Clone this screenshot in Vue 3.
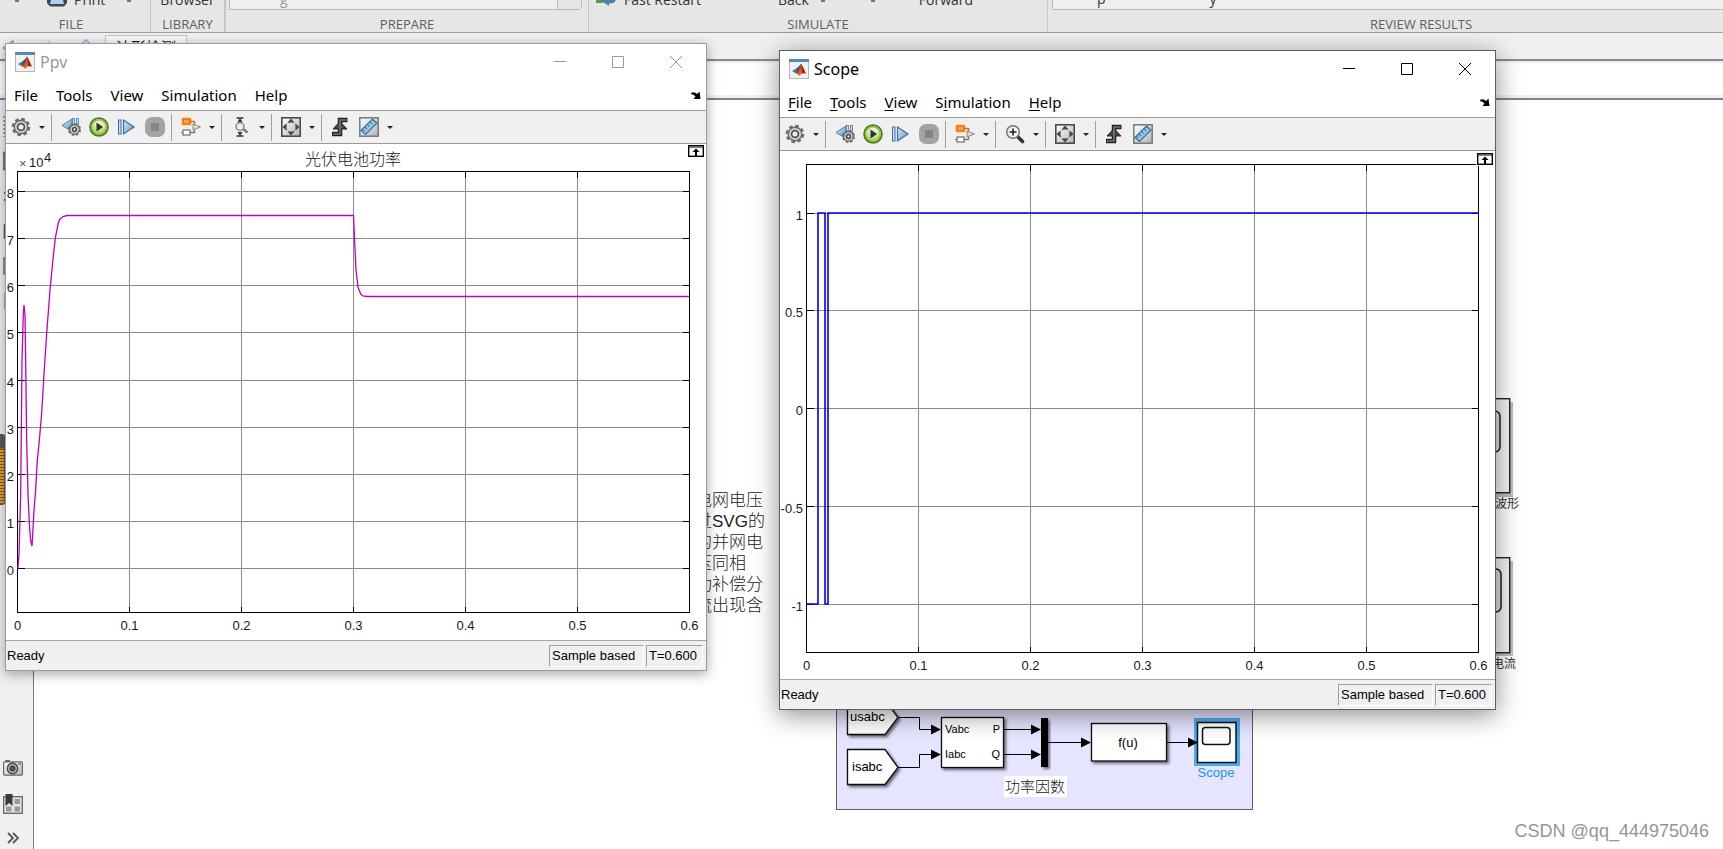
<script setup>
const X_LABELS = ['0', '0.1', '0.2', '0.3', '0.4', '0.5', '0.6']

function makePlot(box, yTicks, xLabelY, labelX) {
  const step = (box.right - box.left) / 6
  return {
    ...box,
    xLabelY,
    labelX,
    xTicks: X_LABELS.map((label, i) => ({ label, x: box.left + step * i })),
    yTicks,
  }
}

const windows = [
  {
    id: 'ppv',
    title: 'Ppv',
    active: false,
    zoomIcon: 'zoom-y',
    viewBox: '0 0 700 496',
    plotTitle: '光伏电池功率',
    plot: makePlot(
      { left: 11.5, right: 683.5, top: 27.5, bottom: 468.5 },
      [8, 7, 6, 5, 4, 3, 2, 1, 0].map((label, i) => ({
        label: String(label),
        y: [47.5, 94.5, 141.5, 188.5, 236.5, 283.5, 330.5, 377.5, 424.5][i],
      })),
      486,
      8,
    ),
    dock: { x: 682, y: 1 },
    curve:
      'M12 424 L13 410 L14.7 349 L16 216 L17.3 170 L18 161 L19 172 L19.5 203 L20.7 299 L22 350 L23.3 379 L24.5 396 L26 402 L28 366 L29.5 348 L31.3 316 L33 300 L35.7 269 L38 230 L40.7 189 L44 146 L47 115 L49.3 94 L52.3 79 L54 75 L57 72.5 L61 71.5 H347.5 L348.7 99 L350 126 L352 143 L354.7 150 L357 152 L361 152.5 H683',
    curveClass: 'curve-power',
  },
  {
    id: 'scope',
    title: 'Scope',
    active: true,
    zoomIcon: 'zoom-in',
    viewBox: '0 0 715 528',
    plotTitle: '',
    plot: makePlot(
      { left: 26.5, right: 698.5, top: 13.5, bottom: 501.5 },
      [
        { label: '1', y: 62.5 },
        { label: '0.5', y: 159.5 },
        { label: '0', y: 257.5 },
        { label: '-0.5', y: 355.5 },
        { label: '-1', y: 453.5 },
      ],
      519,
      23,
    ),
    dock: { x: 697, y: 2 },
    curve: 'M27 453 H38 V62 H45 V453 H48 V62 H698',
    curveClass: 'curve-factor',
  },
]

const menus = [
  ['', 'F', 'ile'],
  ['', 'T', 'ools'],
  ['', 'V', 'iew'],
  ['S', 'i', 'mulation'],
  ['', 'H', 'elp'],
]

const toolGroups = (w) => [
  [['gear', 'Configuration', true]],
  [
    ['step-back', 'Step back', false],
    ['run', 'Run', false],
    ['step', 'Step forward', false],
    ['stop', 'Stop', false],
  ],
  [['model', 'Highlight block', true]],
  [[w.zoomIcon, 'Zoom', true]],
  [['fit', 'Scale axes', true]],
  [
    ['trigger', 'Triggers', false],
    ['ruler', 'Measurements', true],
  ],
]

const note = ['电网电压', '过SVG的', '的并网电', '压同相', '功补偿分', '流出现含']
</script>

<template>
  <div class="desktop">
    <svg class="sprite" aria-hidden="true">
      <defs>
        <linearGradient id="g-blue" x1="0" y1="0" x2="1" y2="1">
          <stop offset="0" stop-color="#d8edf8" /><stop offset="1" stop-color="#5795bd" />
        </linearGradient>
        <linearGradient id="g-green" x1="0" y1="0" x2="0" y2="1">
          <stop offset="0" stop-color="#ffffff" /><stop offset="1" stop-color="#a5cf4c" />
        </linearGradient>
        <linearGradient id="g-gray" x1="0" y1="0" x2="1" y2="1">
          <stop offset="0" stop-color="#ffffff" /><stop offset="1" stop-color="#b4b4b4" />
        </linearGradient>
        <linearGradient id="g-flame" x1="0" y1="0" x2="1" y2="1">
          <stop offset="0" stop-color="#8c1d12" /><stop offset=".5" stop-color="#e5531b" /><stop offset="1" stop-color="#f9a11b" />
        </linearGradient>
      </defs>
      <symbol id="i-matlab" viewBox="0 0 20 20">
        <rect x=".5" y=".5" width="19" height="19" fill="#f1f1f1" stroke="#b4b8bd" />
        <rect x="0" y="0" width="20" height="3" fill="#5a88b5" />
        <path d="M3 12 L8 9 L10 11.500 L7 14.500 Z" fill="#3d78b0" />
        <path d="M8 9 Q10.500 7 12 4.500 L11 12 L7 14.500 Z" fill="#1f5b86" />
        <path d="M12 4.500 Q14.500 9 17 15 Q14 12.500 10 17 Q9.500 14.500 7 14.500 Q10 12 12 4.500 Z" fill="url(#g-flame)" />
        <path d="M12 4.500 Q14.500 9 17 15 Q14.800 13.500 13 14.500 Q13.500 9 12 4.500 Z" fill="#8f2413" />
      </symbol>
      <symbol id="i-gear" viewBox="0 0 20 20">
        <circle cx="10" cy="10" r="8" fill="none" stroke="#6d6d6d" stroke-width="2.600" stroke-dasharray="3.600 2.680" />
        <circle cx="10" cy="10" r="6.800" fill="#d2d2d2" stroke="#6a6a6a" stroke-width="1.400" />
        <circle cx="10" cy="10" r="3.400" fill="#f0f0f0" stroke="#555" stroke-width="1.800" />
      </symbol>
      <symbol id="i-step-back" viewBox="0 0 20 20">
        <path d="M1 8.500 L11 2 V14.500 Z" fill="url(#g-blue)" stroke="#4c7ea5" />
        <rect x="11.500" y="1.500" width="2" height="9" fill="#bfe0f3" stroke="#4c7ea5" stroke-width=".8" />
        <rect x="15.500" y="1.500" width="2" height="9" fill="#bfe0f3" stroke="#4c7ea5" stroke-width=".8" />
        <circle cx="13.500" cy="12.500" r="5.600" fill="none" stroke="#6d6d6d" stroke-width="1.800" stroke-dasharray="2.600 1.800" />
        <circle cx="13.500" cy="12.500" r="4.700" fill="#d4d4d4" stroke="#666" stroke-width="1.200" />
        <circle cx="13.500" cy="12.500" r="1.900" fill="#eee" stroke="#444" stroke-width="1.500" />
      </symbol>
      <symbol id="i-run" viewBox="0 0 20 20">
        <circle cx="10" cy="10" r="8.900" fill="url(#g-green)" stroke="#4b7a1c" stroke-width="1.800" />
        <circle cx="10" cy="10" r="7.200" fill="none" stroke="#8dbd37" stroke-width="1.400" />
        <path d="M7.500 5.500 L14 10 L7.500 14.500 Z" fill="#333" />
      </symbol>
      <symbol id="i-step" viewBox="0 0 20 20">
        <rect x="1.500" y="3" width="2.500" height="14" fill="#bfe0f3" stroke="#3f719b" />
        <path d="M6.500 3 L17 10 L6.500 17 Z" fill="url(#g-blue)" stroke="#3f719b" stroke-width="1.200" />
      </symbol>
      <symbol id="i-stop" viewBox="0 0 20 20">
        <rect x="0" y="0" width="20" height="20" rx="7" fill="#a3a3a3" />
        <rect x="6" y="6" width="8" height="8" fill="#848484" />
      </symbol>
      <symbol id="i-model" viewBox="0 0 20 20">
        <rect x="0" y="0" width="11" height="9" rx="2" fill="#ffd37a" />
        <rect x="2" y="2" width="7" height="5" fill="#f9a04a" stroke="#e0641c" stroke-width="1.300" />
        <path d="M9 4.500 H13.500 V8" fill="none" stroke="#e0641c" stroke-width="1.400" />
        <path d="M8 15.500 H13.500 V12" fill="none" stroke="#777" stroke-width="1.300" />
        <path d="M12 7 L19.500 10 L12 13 Z" fill="#ddd" stroke="#888" />
        <rect x="2" y="13" width="7" height="5" fill="#fff" stroke="#777" stroke-width="1.300" />
        <path d="M0 15.500 H2" stroke="#777" />
      </symbol>
      <symbol id="i-zoom-y" viewBox="0 0 20 20">
        <path d="M5.500 1 H12.500 M5.500 19 H12.500" stroke="#333" stroke-width="1.600" />
        <path d="M9 1 L11.500 5 H6.500 Z M9 19 L11.500 15 H6.500 Z" fill="#333" />
        <path d="M12 12 L16.500 15.500" stroke="#777" stroke-width="2.400" />
        <circle cx="9" cy="9.500" r="4" fill="#e3edf2" stroke="#888" stroke-width="1.400" />
      </symbol>
      <symbol id="i-zoom-in" viewBox="0 0 20 20">
        <path d="M12 12 L17.500 17.500" stroke="#333" stroke-width="3.600" stroke-linecap="round" />
        <circle cx="8" cy="8" r="6.300" fill="#edf4f7" stroke="#6e7478" stroke-width="1.500" />
        <path d="M4.500 8 H11.500 M8 4.500 V11.500" stroke="#222" stroke-width="1.600" />
      </symbol>
      <symbol id="i-fit" viewBox="0 0 20 20">
        <rect x=".8" y=".8" width="18.400" height="18.400" fill="url(#g-gray)" stroke="#4a4a4a" stroke-width="1.600" />
        <path d="M10 1.500 L13.500 5.500 H6.500 Z M10 18.500 L13.500 14.500 H6.500 Z M1.500 10 L5.500 6.500 V13.500 Z M18.500 10 L14.500 6.500 V13.500 Z" fill="#444" />
        <circle cx="10" cy="10" r="5" fill="none" stroke="#666" stroke-dasharray="2 2" />
      </symbol>
      <symbol id="i-trigger" viewBox="0 0 20 20">
        <path d="M1 17 H9 V3 H16.500" fill="none" stroke="#222" stroke-width="4.500" />
        <path d="M9 4.500 L16 12 H2 Z" fill="#444" stroke="#222" />
        <path d="M2 17 H9 V3 H15.500" fill="none" stroke="#777" stroke-width="1.600" />
      </symbol>
      <symbol id="i-ruler" viewBox="0 0 20 20">
        <rect x=".8" y=".8" width="18.400" height="18.400" fill="url(#g-gray)" stroke="#777" stroke-width="1.500" />
        <path d="M2 13.500 L13.500 2 L18 6 L6.500 17.500 Z" fill="#8dc7e6" stroke="#3c6f96" stroke-width="1.200" />
        <path d="M6 10 L8 12 M8.500 7.500 L10.500 9.500 M11 5 L13 7 M13.500 2.800 L15 4.300 M3.800 12.200 L5.500 14" stroke="#28587e" />
      </symbol>
      <symbol id="i-camera" viewBox="0 0 20 16">
        <rect x="2" y="0" width="5" height="3" rx="1" fill="#666" />
        <rect x=".6" y="1.800" width="18.800" height="13.400" rx="1" fill="url(#g-gray)" stroke="#666" stroke-width="1.200" />
        <circle cx="9.500" cy="8.500" r="5.200" fill="#b5b5b5" stroke="#4a4a4a" stroke-width="1.400" />
        <circle cx="9.500" cy="8.500" r="2.600" fill="#555" stroke="#333" />
        <path d="M15 4 H18" stroke="#555" />
      </symbol>
      <symbol id="i-bookmark" viewBox="0 0 20 20">
        <rect x=".7" y="2.700" width="18.600" height="16.600" fill="#e4e4e4" stroke="#666" stroke-width="1.300" />
        <path d="M11.500 5 H17 V10 H11.500 Z M11.500 12.500 H17 V17.500 H11.500 Z M3 12.500 H8.500 V17.500 H3 Z" fill="#999" />
        <path d="M2.500 0 H9.500 V12 L6 9 L2.500 12 Z" fill="#3a3a3a" />
      </symbol>
    </svg>

    <header class="ribbon">
      <section class="group file">
        <div class="strip">
          <span class="caret"></span>
          <svg class="printer" viewBox="0 0 20 7"><path d="M0 0 H20 V3 L17 6.500 H3 L0 3 Z" fill="#3d4652" /><path d="M4 0 H16 L17 4 H3 Z" fill="#a9d3ee" /></svg>
          <span>Print</span>
          <span class="caret end"></span>
        </div>
        <h2>FILE</h2>
      </section>
      <section class="group library">
        <div class="strip centered"><span>Browser</span></div>
        <h2>LIBRARY</h2>
      </section>
      <section class="group prepare">
        <div class="strip"><div class="gallery"><span>g</span><i></i></div></div>
        <h2>PREPARE</h2>
      </section>
      <section class="group simulate">
        <div class="strip">
          <svg class="restart" viewBox="0 0 20 6"><path d="M0 0 H7 V3 H0 Z" fill="#5c9a3c" /><path d="M4 0 H20 Q18 4 13 3.500 V6 L7 2 Z" fill="#4b82ab" /></svg>
          <span class="fast">Fast Restart</span>
          <span>Back</span>
          <span class="caret near"></span>
          <span class="caret far"></span>
          <span>Forward</span>
        </div>
        <h2>SIMULATE</h2>
      </section>
      <section class="group review">
        <div class="strip"><div class="gallery results"><span>p</span><span class="tail">y</span></div></div>
        <h2>REVIEW RESULTS</h2>
      </section>
    </header>

    <nav class="explorer">
      <svg class="arrows" viewBox="0 0 100 26">
        <path d="M3 15 L13 7.500 V22 Z" fill="#b8d9ec" stroke="#5b90b5" />
        <path d="M48 7.500 L57 15 L48 22 Z" fill="#e4e4e4" stroke="#cfcfcf" />
        <path d="M77 16 L86 6.500 L95 16 Z" fill="#c8e2f1" stroke="#5b90b5" />
      </svg>
      <button class="tab" type="button">波形检测</button>
    </nav>
    <div class="address"></div>

    <main class="editor">
      <aside class="palette">
        <svg class="edge-icons" viewBox="0 0 34 410">
          <path d="M4.500 16 V37" stroke="#888" stroke-width="2" stroke-dasharray="2 2" />
          <path d="M34 52.500 H4 V69.500 H34" fill="#ddd" stroke="#555" stroke-width="1.500" />
          <path d="M4 93 H8 M4 100 H8" stroke="#555" stroke-width="2" />
          <path d="M34 125 H4.500 V138 H34" fill="#ddd" stroke="#555" stroke-width="1.500" />
          <path d="M34 158 H4 V174 H34" fill="#ccc" stroke="#777" stroke-width="1.500" />
          <path d="M34 193 H4.500 V209 H34" fill="#ccc" stroke="#aaa" />
          <rect x="-10" y="334" width="15" height="71" rx="3" fill="#5a5a5a" />
          <path d="M0 376 H4" stroke="#f5a21d" stroke-width="55" />
          <path d="M2 349 V404" stroke="#6c5b3c" stroke-width="4" stroke-dasharray="1 2" />
        </svg>
        <div class="palette-tools">
          <button type="button" aria-label="Screenshot"><svg class="cam"><use href="#i-camera" /></svg></button>
          <button type="button" aria-label="Model browser"><svg class="book"><use href="#i-bookmark" /></svg></button>
          <button type="button" aria-label="Expand palette">
            <svg class="more" viewBox="0 0 12 12"><path d="M1 1 L6 6 L1 11 M6 1 L11 6 L6 11" fill="none" stroke="#555" stroke-width="1.800" /></svg>
          </button>
        </div>
      </aside>

      <div class="canvas">
        <p class="note"><span v-for="line in note" :key="line">{{ line }}</span></p>

        <svg class="block wave" viewBox="0 0 110 112">
          <rect x="5" y="4" width="94" height="95" fill="#555" opacity=".4" />
          <rect x=".7" y=".7" width="95" height="94" fill="#f4f4f4" stroke="#222" stroke-width="1.400" />
          <rect x="10" y="13" width="76" height="41" rx="5" fill="#ddd" stroke="#111" stroke-width="1.400" />
          <text x="105" y="110" text-anchor="end">波形</text>
        </svg>
        <svg class="block current" viewBox="0 0 110 112">
          <rect x="5" y="4" width="94" height="95" fill="#555" opacity=".4" />
          <rect x=".7" y=".7" width="95" height="95" fill="#f4f4f4" stroke="#222" stroke-width="1.400" />
          <rect x="10" y="12" width="77" height="43" rx="5" fill="#ddd" stroke="#111" stroke-width="1.400" />
          <text x="102" y="111" text-anchor="end">电流</text>
        </svg>

        <svg class="subsystem" viewBox="0 0 420 124">
          <defs>
            <filter id="soft" x="-20%" y="-20%" width="150%" height="150%">
              <feDropShadow dx="2" dy="2" stdDeviation="1.500" flood-color="#000" flood-opacity=".55" />
            </filter>
          </defs>
          <rect x=".5" y="0" width="416" height="119.500" fill="#e5e5ff" stroke="#5c5c6a" />
          <g fill="#fff" stroke="#111" stroke-width="1.300" filter="url(#soft)">
            <path d="M11.500 10 H49 L62 27.500 L49 44.500 H11.500 Z" />
            <path d="M11.500 59.500 H49 L62 77.500 L49 94.500 H11.500 Z" />
            <rect x="105.500" y="27.500" width="62" height="50" />
            <rect x="255.500" y="33.500" width="75" height="37.500" />
          </g>
          <rect x="205" y="28" width="7" height="49" fill="#000" filter="url(#soft)" />
          <rect x="358" y="28" width="46" height="48" fill="#4ea8f2" />
          <g fill="#fff" stroke="#111" stroke-width="1.500">
            <rect x="361.500" y="32.500" width="38.500" height="40" />
            <rect x="366.500" y="37.500" width="27.500" height="17" rx="3" />
          </g>
          <path d="M62 27.500 H83.500 V39.500 H97 M62 77.500 H83.500 V64.500 H97 M168 39.500 H197 M168 64.500 H197 M212 52.500 H247 M331 52.500 H354" fill="none" stroke="#000" />
          <path d="M95 34.500 L105 39.500 L95 44.500 Z M95 59.500 L105 64.500 L95 69.500 Z M195 34.500 L205 39.500 L195 44.500 Z M195 59.500 L205 64.500 L195 69.500 Z M245 47.500 L255 52.500 L245 57.500 Z M352 47.500 L362 52.500 L352 57.500 Z" />
          <rect x="168" y="86" width="63" height="21" fill="#fff" />
          <g class="names">
            <text x="14" y="31">usabc</text>
            <text x="16" y="81">isabc</text>
            <text x="292" y="57" text-anchor="middle">f(u)</text>
            <text class="selected" x="380" y="87" text-anchor="middle">Scope</text>
          </g>
          <g class="ports">
            <text x="109" y="43">Vabc</text>
            <text x="109" y="68">Iabc</text>
            <text x="164" y="43" text-anchor="end">P</text>
            <text x="164" y="68" text-anchor="end">Q</text>
          </g>
          <text class="caption" x="199" y="102" text-anchor="middle">功率因数</text>
        </svg>
      </div>
    </main>

    <p class="credit">CSDN @qq_444975046</p>

    <article v-for="w in windows" :key="w.id" class="window" :class="[w.id, { active: w.active }]">
      <header class="titlebar">
        <svg class="icon"><use href="#i-matlab" /></svg>
        <h1>{{ w.title }}</h1>
        <div class="controls">
          <button type="button" aria-label="Minimize"><svg viewBox="0 0 12 12"><path d="M0 5.500 H12" /></svg></button>
          <button type="button" aria-label="Maximize"><svg viewBox="0 0 12 12"><path d="M.5 .5 H11.500 V11.500 H.5 Z" /></svg></button>
          <button type="button" aria-label="Close"><svg viewBox="0 0 12 12"><path d="M0 0 L12 12 M12 0 L0 12" /></svg></button>
        </div>
      </header>

      <nav class="menubar">
        <button v-for="m in menus" :key="m.join('')" type="button">{{ m[0] }}<span class="key">{{ m[1] }}</span>{{ m[2] }}</button>
        <svg class="undock" viewBox="0 0 10 8"><path d="M0 2 Q3 0 6 3 L8.500 .5 L9.500 8 H2.500 L4.500 5.500 Q2.500 3 0 3 Z" fill="#000" /></svg>
      </nav>

      <div class="toolbar">
        <div v-for="(group, gi) in toolGroups(w)" :key="gi" class="tools">
          <template v-for="t in group" :key="t[0]">
            <button class="tool" type="button" :aria-label="t[1]"><svg class="icon"><use :href="'#i-' + t[0]" /></svg></button>
            <button v-if="t[2]" class="drop" type="button" :aria-label="t[1] + ' options'"><i></i></button>
          </template>
        </div>
      </div>

      <svg class="plot" :viewBox="w.viewBox">
        <g class="grid">
          <line v-for="t in w.plot.xTicks.slice(1, -1)" :key="t.label" :x1="t.x" :x2="t.x" :y1="w.plot.top" :y2="w.plot.bottom" />
          <line v-for="t in w.plot.yTicks" :key="t.label" :x1="w.plot.left" :x2="w.plot.right" :y1="t.y" :y2="t.y" />
        </g>
        <g class="axes">
          <rect :x="w.plot.left" :y="w.plot.top" :width="w.plot.right - w.plot.left" :height="w.plot.bottom - w.plot.top" />
          <path v-for="t in w.plot.xTicks.slice(1, -1)" :key="t.label" :d="`M${t.x} ${w.plot.top} v6 M${t.x} ${w.plot.bottom} v-6`" />
          <path v-for="t in w.plot.yTicks" :key="t.label" :d="`M${w.plot.left} ${t.y} h7 M${w.plot.right} ${t.y} h-7`" />
        </g>
        <path :class="w.curveClass" :d="w.curve" />
        <g class="labels">
          <text v-for="t in w.plot.xTicks" :key="t.label" :x="t.x" :y="w.plot.xLabelY" text-anchor="middle">{{ t.label }}</text>
          <text v-for="t in w.plot.yTicks" :key="t.label" :x="w.plot.labelX" :y="t.y + 6" text-anchor="end">{{ t.label }}</text>
        </g>
        <g v-if="w.plotTitle" class="labels">
          <text class="times" x="13" y="24">×</text>
          <text x="23" y="23">10</text>
          <text x="38" y="18">4</text>
          <text class="plot-title" x="347" y="21" text-anchor="middle">{{ w.plotTitle }}</text>
        </g>
        <g :transform="`translate(${w.dock.x} ${w.dock.y})`">
          <rect x="-1" y="-1" width="18" height="14" fill="#fff" />
          <rect x=".7" y=".7" width="14.600" height="10.600" fill="#fff" stroke="#000" stroke-width="1.400" />
          <path d="M1 2 H15" stroke="#555" stroke-width="1.500" />
          <path d="M8 3.500 L11.500 7 H9 V11 H7 V7 H4.500 Z" fill="#000" />
        </g>
      </svg>

      <footer class="status">
        <span class="ready">Ready</span>
        <span class="cell mode">Sample based</span>
        <span class="cell time">T=0.600</span>
      </footer>
    </article>
  </div>
</template>

<style>
html,
body,
#app {
  height: 100%;
}
body {
  margin: 0;
  overflow: hidden;
}
</style>

<style scoped>
.desktop {
  position: relative;
  display: flex;
  flex-direction: column;
  height: 100%;
  overflow: hidden;
  background: #fff;
  color: #000;
  font-family: "Noto Sans", "Noto Sans CJK SC", sans-serif;
}
.sprite {
  position: absolute;
  width: 0;
  height: 0;
}
button {
  margin: 0;
  padding: 0;
  border: 0;
  background: none;
  color: inherit;
  font: inherit;
}
svg {
  display: block;
}
h1,
h2,
p {
  margin: 0;
  font-weight: 400;
}

.ribbon {
  display: flex;
  flex: none;
  height: 32px;
  overflow: hidden;
  background: #e6e6e6;
  border-bottom: 1px solid #9d9d9d;
  font-family: "Open Sans", sans-serif;
}
.group {
  display: flex;
  flex: none;
  flex-direction: column;
  box-sizing: border-box;
  border-right: 1px solid #c6c6c6;
}
.group h2 {
  color: #606060;
  font-size: 13px;
  line-height: 28px;
  text-align: center;
}
.file {
  width: 151px;
  padding-right: 8px;
}
.library {
  width: 75px;
  border-right: 2px solid #c6c6c6;
}
.prepare {
  width: 363px;
}
.simulate {
  width: 459px;
}
.review {
  width: 747px;
}
.strip {
  display: flex;
  align-items: flex-end;
  flex: none;
  height: 10px;
  overflow: hidden;
  color: #333;
  font-size: 14px;
  line-height: 20px;
}
.strip.centered {
  justify-content: center;
}
.file .strip {
  padding-left: 15px;
}
.caret {
  width: 4px;
  height: 2px;
  margin-bottom: 8px;
  background: #777;
}
.caret.end {
  margin-left: 22px;
}
.caret.near {
  margin-left: 12px;
}
.caret.far {
  margin: 0 44px 8px 46px;
}
.printer {
  width: 20px;
  height: 7px;
  margin: 0 7px 3px 28px;
}
.restart {
  width: 20px;
  height: 6px;
  margin: 0 8px 4px 7px;
}
.fast {
  margin-right: 77px;
}
.gallery {
  display: flex;
  flex: 1;
  justify-content: space-between;
  align-items: flex-end;
  box-sizing: border-box;
  height: 20px;
  margin: 0 6px 0 3px;
  padding-left: 50px;
  background: #efefef;
  border: 1px solid #b9b9b9;
  border-radius: 0 0 4px 0;
  color: #999;
}
.gallery i {
  width: 23px;
  height: 18px;
  background: #e6e6e6;
  border-left: 1px solid #b9b9b9;
}
.gallery.results {
  justify-content: flex-start;
  margin: 0 0 0 4px;
  padding-left: 44px;
  color: #333;
}
.tail {
  margin-left: 104px;
}

.explorer {
  display: flex;
  flex: none;
  align-items: flex-start;
  height: 26px;
  background: #f0f0f0;
}
.arrows {
  width: 100px;
  height: 26px;
}
.tab {
  box-sizing: border-box;
  width: 82px;
  height: 24px;
  margin: 2px 0 0 5px;
  background: #f8f8f8;
  border: 1px solid #c4c4c4;
  color: #222;
  font-size: 15px;
  line-height: 22px;
}
.address {
  flex: none;
  box-sizing: border-box;
  height: 41px;
  background: #fff;
  border-top: 2px solid #868a94;
  border-bottom: 2px solid #7f838d;
  box-shadow: inset 0 2px #f0f0f0, inset 0 -3px #f0f0f0;
}
.editor {
  display: flex;
  flex: 1;
  min-height: 0;
}
.palette {
  display: flex;
  flex: none;
  flex-direction: column;
  justify-content: space-between;
  width: 33px;
  background: #f0f0f0;
  border-right: 1px solid #7a7a7a;
}
.edge-icons {
  width: 34px;
  height: 410px;
}
.palette-tools {
  display: flex;
  flex-direction: column;
  gap: 18px;
  padding: 0 0 5px 3px;
}
.palette-tools svg {
  width: 20px;
  height: 20px;
}
.palette-tools .cam {
  height: 16px;
}
.palette-tools .more {
  width: 12px;
  height: 12px;
  margin-left: 4px;
}
.canvas {
  position: relative;
  flex: 1;
  background: #fff;
}
.note {
  position: absolute;
  left: 661px;
  top: 390px;
  display: flex;
  flex-direction: column;
  color: #222;
  font-family: "Liberation Sans", "Noto Sans CJK SC", sans-serif;
  font-size: 17px;
  font-weight: 300;
  line-height: 21px;
  white-space: nowrap;
}
.block {
  position: absolute;
  left: 1380px;
  width: 110px;
  height: 112px;
  fill: #333;
  font-family: "Noto Sans CJK SC", sans-serif;
  font-size: 12px;
}
.wave {
  top: 298px;
}
.current {
  top: 457px;
}
.subsystem {
  position: absolute;
  left: 802px;
  top: 590px;
  width: 420px;
  height: 124px;
  font-family: "Liberation Sans", "Noto Sans CJK SC", sans-serif;
}
.names {
  font-size: 13px;
}
.ports {
  font-size: 11px;
}
.selected {
  fill: #1896ff;
}
.caption {
  fill: #222;
  font-size: 15px;
  font-weight: 300;
}
.credit {
  position: absolute;
  right: 14px;
  bottom: 6px;
  color: #959595;
  font-family: "Liberation Sans", sans-serif;
  font-size: 18px;
  line-height: 24px;
}

.window {
  position: absolute;
  display: flex;
  flex-direction: column;
  box-sizing: border-box;
  background: #fff;
  border: 1px solid #9b9b9b;
  box-shadow: 0 3px 12px rgba(0, 0, 0, 0.35);
}
.window.active {
  border-color: #5f5f5f;
  box-shadow: 0 5px 24px rgba(0, 0, 0, 0.45);
}
.ppv {
  left: 5px;
  top: 43px;
  width: 702px;
}
.scope {
  left: 779px;
  top: 50px;
  width: 717px;
}
.titlebar {
  display: flex;
  align-items: center;
  height: 36px;
  padding: 0 1px 0 9px;
  color: #999;
}
.active .titlebar {
  color: #000;
}
.icon {
  width: 20px;
  height: 20px;
}
.titlebar h1 {
  flex: 1;
  margin-left: 5px;
  font-size: 16px;
  line-height: 36px;
}
.controls {
  display: flex;
}
.controls button {
  display: grid;
  place-items: center;
  width: 58px;
  height: 36px;
}
.controls svg {
  width: 12px;
  height: 12px;
  fill: none;
  stroke: currentColor;
}
.menubar {
  display: flex;
  align-items: center;
  gap: 18px;
  height: 30px;
  padding: 0 5px 0 8px;
  font-size: 15px;
  line-height: 30px;
}
.active .key {
  text-decoration: underline;
  text-underline-offset: 2px;
}
.undock {
  width: 10px;
  height: 8px;
  margin-left: auto;
}
.toolbar {
  display: flex;
  align-items: center;
  box-sizing: border-box;
  height: 34px;
  padding-left: 1px;
  background: #f0f0f0;
  border-top: 1px solid #9a9a9a;
  border-bottom: 1px solid #9a9a9a;
}
.tools {
  display: flex;
  align-items: center;
}
.tools + .tools::before {
  content: "";
  width: 1px;
  height: 27px;
  margin: 0 5px 0 2px;
  background: #a0a0a0;
}
.tool {
  display: grid;
  place-items: center;
  width: 28px;
  height: 30px;
}
.drop {
  display: grid;
  place-items: center;
  width: 14px;
  height: 30px;
}
.drop i {
  border: 3px solid transparent;
  border-top-color: #222;
  border-bottom: 0;
}
.plot {
  width: 100%;
}
.grid line {
  stroke: #8c8c8c;
  shape-rendering: crispEdges;
}
.axes {
  fill: none;
  stroke: #000;
  shape-rendering: crispEdges;
}
.curve-power {
  fill: none;
  stroke: #bf00bf;
  stroke-width: 1.3;
}
.curve-factor {
  fill: none;
  stroke: #0000f0;
  stroke-width: 1.6;
}
.labels {
  fill: #1a1a1a;
  font-family: "Liberation Sans", "Noto Sans CJK SC", sans-serif;
  font-size: 13px;
}
.times {
  fill: #555;
}
.plot-title {
  font-size: 16px;
  font-weight: 300;
}
.status {
  display: flex;
  align-items: center;
  gap: 2px;
  box-sizing: border-box;
  height: 30px;
  padding: 0 3px 0 1px;
  background: #f0f0f0;
  border-top: 1px solid #a5a5a5;
  font-family: "Liberation Sans", sans-serif;
  font-size: 13px;
}
.ready {
  flex: 1;
}
.cell {
  box-sizing: border-box;
  height: 22px;
  padding-left: 2px;
  border: 1px solid #a0a0a0;
  border-right-color: #fff;
  border-bottom-color: #fff;
  line-height: 20px;
}
.mode {
  width: 95px;
}
.time {
  width: 57px;
}
</style>
